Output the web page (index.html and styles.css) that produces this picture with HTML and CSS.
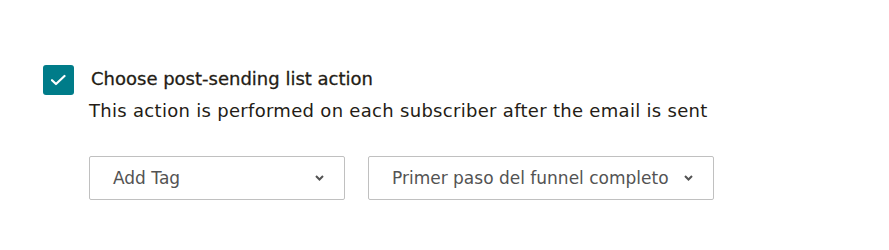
FILE: index.html
```html
<!doctype html>
<html>
<head>
    <link rel="stylesheet" href="styles.css">
</head>
<body>

<div class="post-action">
    <label class="check-row">
        <span class="checkbox">
            <svg width="16" height="16" viewBox="0 0 16 16">
                <path d="M1 8.2 L5 12 L13.5 4" fill="none" stroke="#fff" stroke-width="2.2" stroke-linecap="round" stroke-linejoin="round"/>
            </svg>
        </span>
        <span class="check-title">Choose post-sending list action</span>
    </label>
    <div class="details">
        <p class="description">This action is performed on each subscriber after the email is sent</p>
        <div class="selects">
            <div class="select select-action">
                <span class="select-value">Add Tag</span>
                <svg class="chevron" width="9" height="6" viewBox="0 0 9 6">
                    <path d="M1 1 L4.5 4.5 L8 1" fill="none" stroke="#535353" stroke-width="2"/>
                </svg>
            </div>
            <div class="select select-tag">
                <span class="select-value">Primer paso del funnel completo</span>
                <svg class="chevron" width="9" height="6" viewBox="0 0 9 6">
                    <path d="M1 1 L4.5 4.5 L8 1" fill="none" stroke="#535353" stroke-width="2"/>
                </svg>
            </div>
        </div>
    </div>
</div>

</body>
</html>
```

FILE: styles.css
```css
body {
    margin: 0;
    background: #fff;
    font-family: "DejaVu Sans", "Open Sans", sans-serif;
    color: #241c15;
}

.post-action {
    padding: 65px 0 0 43px;
}

.check-row {
    display: flex;
    align-items: center;
    gap: 17px;
}

.checkbox {
    width: 31px;
    height: 30px;
    border-radius: 3px;
    background: #007c89;
    display: flex;
    align-items: center;
    justify-content: center;
}

.check-title {
    font-size: 18px;
    line-height: 24px;
    margin-top: -3px;
    -webkit-text-stroke: 0.3px #241c15;
}

.details {
    padding-left: 46px;
}

.description {
    margin: 3px 0 0;
    font-size: 18px;
    line-height: 26px;
    letter-spacing: 0.3px;
}

.selects {
    display: flex;
    gap: 23px;
    margin-top: 32px;
}

.select {
    height: 44px;
    box-sizing: border-box;
    border: 1px solid #c0c0c0;
    border-radius: 2px;
    display: flex;
    align-items: center;
    justify-content: space-between;
    padding: 0 20px 0 23px;
    color: #535353;
    font-size: 17px;
}

.select-action {
    width: 256px;
}

.select-tag {
    width: 346px;
}
```
